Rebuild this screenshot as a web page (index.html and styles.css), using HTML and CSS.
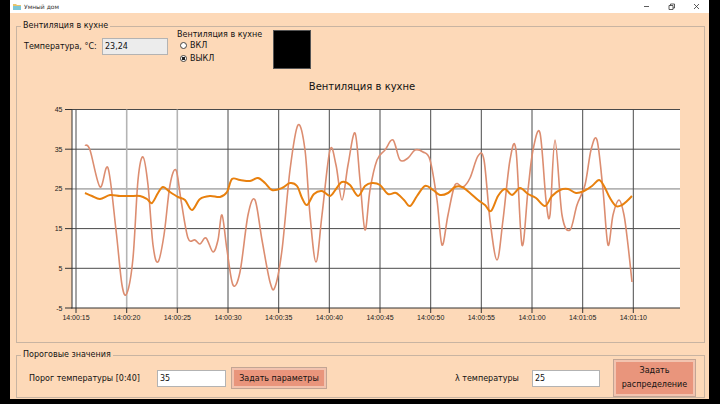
FILE: index.html
```html
<!DOCTYPE html>
<html lang="ru">
<head>
<meta charset="utf-8">
<title>Умный дом</title>
<link rel="stylesheet" href="styles.css">
</head>
<body>
<div class="window">
  <div class="titlebar">
    <svg class="app-icon" viewBox="0 0 8 7" width="8" height="7"><path d="M0 1h3l1 1h4v5H0z" fill="#e9c46a"/><path d="M0 3h8v4H0z" fill="#7cc6d6"/></svg>
    <span class="title">Умный дом</span>
    <div class="controls">
      <span class="ctl"><svg viewBox="0 0 7 7" width="7" height="7"><path d="M1 3.5h5" stroke="#333" stroke-width="0.8"/></svg></span>
      <span class="ctl"><svg viewBox="0 0 7 7" width="7" height="7"><path d="M1 2.5h4v4H1zM2.5 2.5V1h4v4H5" fill="none" stroke="#333" stroke-width="0.8"/></svg></span>
      <span class="ctl"><svg viewBox="0 0 7 7" width="7" height="7"><path d="M1 1l5 5M6 1L1 6" stroke="#333" stroke-width="0.8"/></svg></span>
    </div>
  </div>
  <fieldset class="group group-main">
    <legend>Вентиляция в кухне</legend>
    <div class="top-row">
      <span class="lbl">Температура, °С:</span>
      <div class="textbox readonly">23,24</div>
      <div class="radio-group">
        <div class="rg-title">Вентиляция в кухне</div>
        <div class="radio"><span class="dot"></span>ВКЛ</div>
        <div class="radio"><span class="dot checked"></span>ВЫКЛ</div>
      </div>
      <div class="indicator"></div>
    </div>
    <div class="chart-title">Вентиляция в кухне</div>
    <svg class="chart" width="687" height="249" viewBox="17 93 687 249">
      <rect x="72" y="109.5" width="608" height="198.5" fill="#fff"/>
      <g class="grid">
        <line x1="72" y1="109.5" x2="680" y2="109.5"/>
        <line x1="72" y1="149.2" x2="680" y2="149.2"/>
        <line class="soft" x1="72" y1="188.9" x2="680" y2="188.9"/>
        <line x1="72" y1="228.6" x2="680" y2="228.6"/>
        <line x1="72" y1="268.3" x2="680" y2="268.3"/>
        <line x1="76" y1="109.5" x2="76" y2="308"/>
        <line class="soft" x1="126.7" y1="109.5" x2="126.7" y2="308"/>
        <line class="soft" x1="177.3" y1="109.5" x2="177.3" y2="308"/>
        <line x1="228" y1="109.5" x2="228" y2="308"/>
        <line x1="278.7" y1="109.5" x2="278.7" y2="308"/>
        <line x1="329.3" y1="109.5" x2="329.3" y2="308"/>
        <line x1="380" y1="109.5" x2="380" y2="308"/>
        <line x1="430.7" y1="109.5" x2="430.7" y2="308"/>
        <line x1="481.3" y1="109.5" x2="481.3" y2="308"/>
        <line x1="532" y1="109.5" x2="532" y2="308"/>
        <line x1="582.7" y1="109.5" x2="582.7" y2="308"/>
        <line x1="633.3" y1="109.5" x2="633.3" y2="308"/>
      </g>
      <g class="axis">
        <line x1="72" y1="109.5" x2="72" y2="308.5"/>
        <line x1="71.5" y1="308" x2="680" y2="308"/>
        <line x1="65" y1="109.5" x2="72" y2="109.5"/>
        <line x1="65" y1="149.2" x2="72" y2="149.2"/>
        <line x1="65" y1="188.9" x2="72" y2="188.9"/>
        <line x1="65" y1="228.6" x2="72" y2="228.6"/>
        <line x1="65" y1="268.3" x2="72" y2="268.3"/>
        <line x1="65" y1="308" x2="72" y2="308"/>
        <line x1="76" y1="308" x2="76" y2="313"/>
        <line x1="126.7" y1="308" x2="126.7" y2="313"/>
        <line x1="177.3" y1="308" x2="177.3" y2="313"/>
        <line x1="228" y1="308" x2="228" y2="313"/>
        <line x1="278.7" y1="308" x2="278.7" y2="313"/>
        <line x1="329.3" y1="308" x2="329.3" y2="313"/>
        <line x1="380" y1="308" x2="380" y2="313"/>
        <line x1="430.7" y1="308" x2="430.7" y2="313"/>
        <line x1="481.3" y1="308" x2="481.3" y2="313"/>
        <line x1="532" y1="308" x2="532" y2="313"/>
        <line x1="582.7" y1="308" x2="582.7" y2="313"/>
        <line x1="633.3" y1="308" x2="633.3" y2="313"/>
      </g>
      <g class="ylabels">
        <text x="62.5" y="112">45</text>
        <text x="62.5" y="151.7">35</text>
        <text x="62.5" y="191.4">25</text>
        <text x="62.5" y="231.1">15</text>
        <text x="62.5" y="270.8">5</text>
        <text x="62.5" y="310.5">-5</text>
      </g>
      <g class="xlabels">
        <text x="76" y="319.5">14:00:15</text>
        <text x="126.7" y="319.5">14:00:20</text>
        <text x="177.3" y="319.5">14:00:25</text>
        <text x="228" y="319.5">14:00:30</text>
        <text x="278.7" y="319.5">14:00:35</text>
        <text x="329.3" y="319.5">14:00:40</text>
        <text x="380" y="319.5">14:00:45</text>
        <text x="430.7" y="319.5">14:00:50</text>
        <text x="481.3" y="319.5">14:00:55</text>
        <text x="532" y="319.5">14:01:00</text>
        <text x="582.7" y="319.5">14:01:05</text>
        <text x="633.3" y="319.5">14:01:10</text>
      </g>
      <path id="series-noise" class="series-noise" d=""/>
      <path id="series-temp" class="series-temp" d=""/>
    </svg>
  </fieldset>
  <fieldset class="group group-thresh">
    <legend>Пороговые значения</legend>
    <div class="thresh-row">
      <span class="lbl lbl-thresh">Порог температуры [0:40]</span>
      <div class="textbox field-thresh">35</div>
      <button class="btn btn-params">Задать параметры</button>
      <span class="lbl lbl-lambda">λ температуры</span>
      <div class="textbox field-lambda">25</div>
      <button class="btn btn-dist">Задать<br>распределение</button>
    </div>
  </fieldset>
</div>
<script src="script.js"></script>
</body>
</html>
```

FILE: styles.css
```css
* { box-sizing: border-box; }
html, body { margin: 0; padding: 0; }
body {
  background: #000;
  width: 720px;
  height: 404px;
  overflow: hidden;
  font-family: "DejaVu Sans", "Noto Sans", sans-serif;
  color: #111;
}
.window {
  margin-left: 10px;
  width: 699px;
  height: 399px;
  background: #fdd9b8;
  display: flex;
  flex-direction: column;
}
.titlebar {
  height: 13px;
  flex: none;
  background: #fff;
  display: flex;
  align-items: center;
  padding-left: 3px;
  font-size: 6px;
  color: #333;
}
.app-icon { margin-right: 3px; display: block; }
.controls { margin-left: auto; display: flex; height: 13px; }
.ctl { width: 25px; height: 13px; display: flex; align-items: center; justify-content: center; }
.ctl svg { display: block; }

.group {
  border: 1px solid #c8b4a2;
  margin: 0;
  padding: 0;
  min-width: 0;
  width: 689px;
  margin-left: 6px;
}
.group legend {
  font-size: 8px;
  line-height: 10px;
  padding: 0 2px;
  margin-left: 4px;
}
.group-main { margin-top: 8px; }
.group-thresh { margin-top: 7px; }

.top-row {
  display: flex;
  align-items: flex-start;
  margin-top: -1px;
  padding-left: 7px;
  height: 39px;
}
.lbl { font-size: 8px; white-space: nowrap; }
.top-row .lbl { width: 78px; line-height: 17px; margin-top: 8px; }
.textbox {
  height: 17px;
  border: 1px solid #b3b3b3;
  background: #fff;
  font-size: 8px;
  line-height: 15px;
  padding-left: 2px;
}
.textbox.readonly { width: 66px; margin-top: 8px; background: #ececec; }
.radio-group { margin-left: 3px; width: 97px; padding-left: 6px; }
.rg-title { font-size: 8px; line-height: 9px; white-space: nowrap; }
.radio {
  display: flex;
  align-items: center;
  height: 13px;
  margin-left: 3px;
  font-size: 8px;
}
.dot {
  width: 7px;
  height: 7px;
  border: 1px solid #444;
  border-radius: 50%;
  background: #fff;
  margin-right: 3px;
}
.dot.checked { background: radial-gradient(circle, #222 0 1.6px, #fff 2px); }
.indicator {
  margin-left: 5px;
  width: 38px;
  height: 39px;
  background: #000;
  border: 1px solid #555;
}
.chart-title {
  margin-top: 12px;
  text-align: center;
  font-size: 10px;
  line-height: 12px;
  padding-left: 3px;
}
.chart { display: block; }
.grid line { stroke: #4a4a4a; stroke-width: 1; }
.grid line.soft { stroke: #b4b4b4; stroke-width: 1.6; }
.axis line { stroke: #333; stroke-width: 1; }
.ylabels text, .xlabels text {
  font-family: "Liberation Sans", Arial, sans-serif;
  font-size: 7px;
  fill: #222;
}
.ylabels text { text-anchor: end; }
.xlabels text { text-anchor: middle; }
.series-noise { fill: none; stroke: #dc8d70; stroke-width: 1.6; stroke-linejoin: round; }
.series-temp { fill: none; stroke: #e8800e; stroke-width: 2; stroke-linejoin: round; }

.thresh-row {
  display: flex;
  align-items: center;
  margin-top: -1px;
  height: 38px;
  padding-left: 12px;
  padding-right: 8px;
}
.lbl-thresh { width: 128px; }
.field-thresh { width: 69px; }
.btn {
  font-family: inherit;
  font-size: 8px;
  color: #111;
  background: #e9957c;
  border: 1px solid #c2a594;
  box-shadow: inset 0 0 0 2px #f2c3af;
  padding: 0;
  margin: 0;
}
.btn-params { margin-left: 5px; width: 96px; height: 22px; }
.lbl-lambda { margin-left: auto; width: 77px; }
.field-lambda { width: 68px; margin-right: 13px; }
.btn-dist { width: 83px; height: 38px; line-height: 14px; }
```

FILE: script.js
```js
var noise = [
  [85,145],[90,150],[100,187],[108,168],[116,230],[122,285],[127,293],[133,258],[138,180],[143,157],
  [148,185],[153,245],[158,262],[164,235],[170,185],[176,170],[181,200],[188,238],[195,240],[200,244],
  [206,238],[213,252],[218,240],[222,215],[227,250],[233,285],[240,272],[248,215],[255,200],[262,240],
  [270,282],[275,287],[282,250],[290,170],[298,125],[305,150],[310,215],[316,262],[322,215],[330,150],
  [336,165],[342,200],[348,165],[355,133],[360,180],[365,230],[370,190],[377,160],[385,150],[393,140],
  [400,160],[408,158],[415,150],[423,152],[430,160],[437,200],[442,245],[448,215],[455,185],[463,187],
  [470,178],[478,156],[484,160],[490,220],[497,260],[503,220],[510,160],[516,150],[522,245],[528,190],
  [533,150],[540,133],[546,200],[550,215],[555,140],[562,215],[570,230],[577,205],[585,185],[591,150],
  [597,140],[603,190],[608,245],[613,215],[619,200],[624,215],[628,245],[632,282]
];
var temp = [
  [85,193],[92,196],[100,199],[110,195],[120,196],[130,196],[140,196],[147,199],[152,203],[158,193],
  [163,187],[170,192],[178,197],[185,200],[192,210],[200,199],[210,196],[220,197],[227,192],[232,179],
  [240,180],[250,181],[258,178],[265,183],[272,190],[282,188],[290,183],[297,186],[302,198],[307,205],
  [314,194],[322,191],[330,196],[336,189],[342,182],[350,185],[358,196],[365,186],[372,183],[380,185],
  [388,194],[396,193],[404,200],[410,206],[417,196],[425,186],[433,190],[440,195],[448,193],[455,187],
  [462,187],[470,193],[478,200],[485,205],[491,211],[498,196],[505,189],[512,195],[520,188],[528,194],
  [536,198],[545,206],[552,196],[560,190],[568,189],[576,193],[584,191],[592,186],[599,180],[604,186],
  [610,198],[616,206],[622,205],[627,201],[632,196]
];
function spline(p) {
  var d = "M" + p[0][0] + " " + p[0][1];
  for (var i = 0; i < p.length - 1; i++) {
    var p0 = p[i - 1] || p[i], p1 = p[i], p2 = p[i + 1], p3 = p[i + 2] || p2;
    var c1x = p1[0] + (p2[0] - p0[0]) / 6, c1y = p1[1] + (p2[1] - p0[1]) / 6;
    var c2x = p2[0] - (p3[0] - p1[0]) / 6, c2y = p2[1] - (p3[1] - p1[1]) / 6;
    d += " C" + c1x.toFixed(2) + " " + c1y.toFixed(2) + " " + c2x.toFixed(2) + " " + c2y.toFixed(2) + " " + p2[0] + " " + p2[1];
  }
  return d;
}
document.getElementById("series-noise").setAttribute("d", spline(noise));
document.getElementById("series-temp").setAttribute("d", spline(temp));
```
